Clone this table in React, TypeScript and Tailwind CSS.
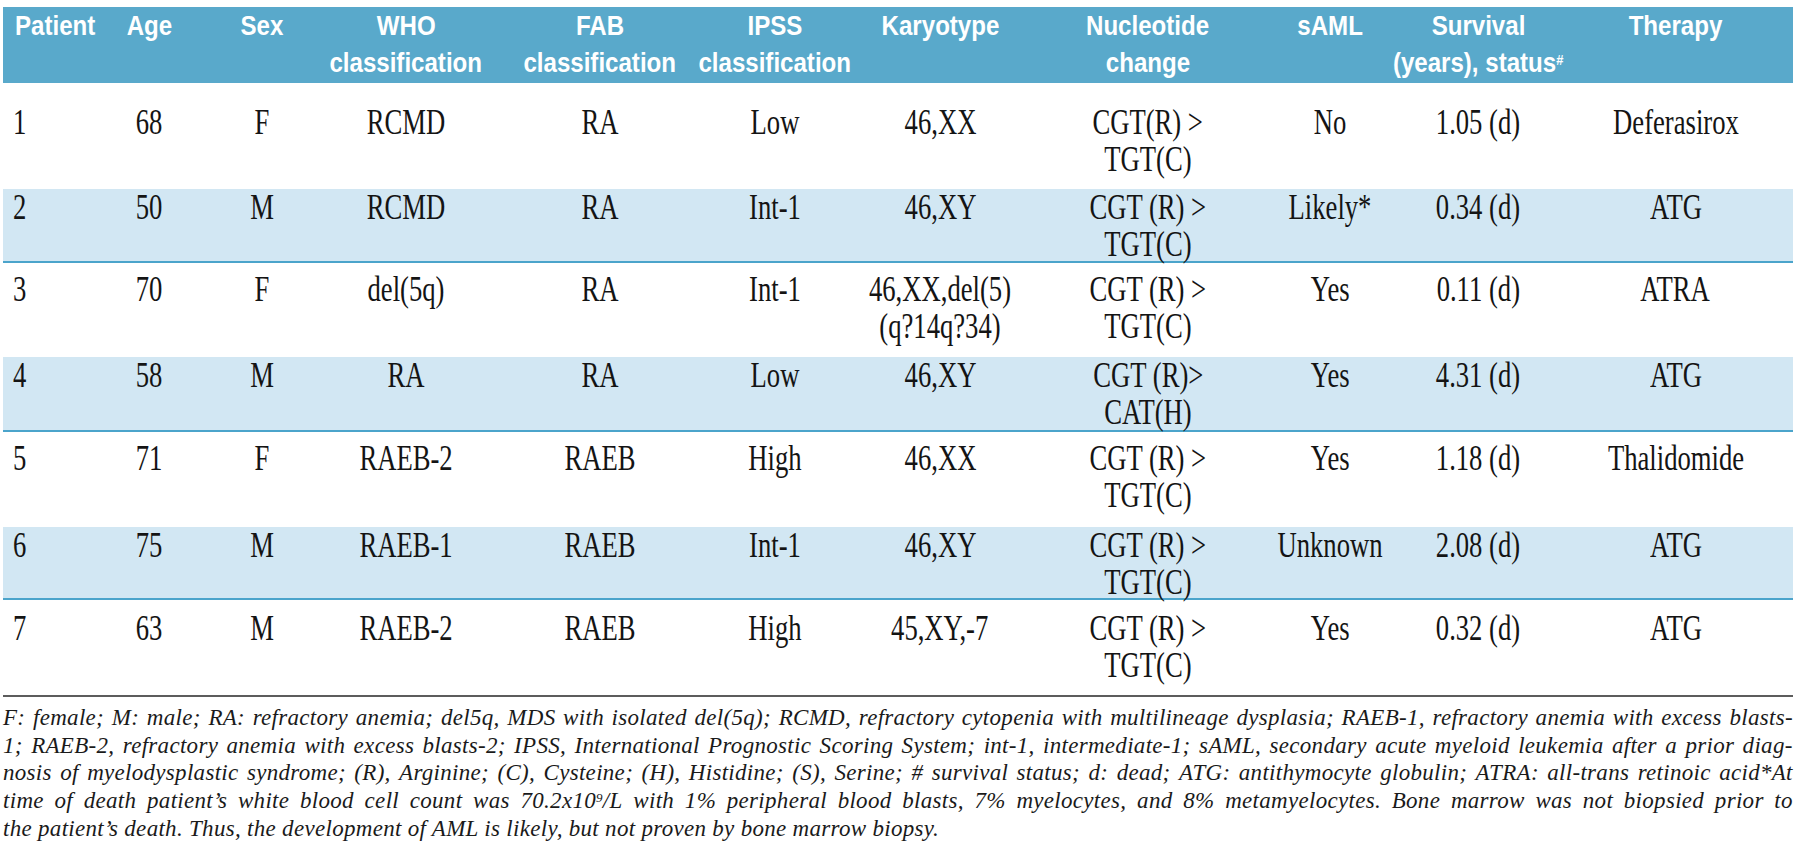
import React from "react";

type Cell = string | string[];

const header: (string | React.ReactNode)[][] = [
  ["Patient"],
  ["Age"],
  ["Sex"],
  ["WHO", "classification"],
  ["FAB", "classification"],
  ["IPSS", "classification"],
  ["Karyotype"],
  ["Nucleotide", "change"],
  ["sAML"],
  [
    "Survival",
    <>
      (years), status<sup className="text-[15px]">#</sup>
    </>,
  ],
  ["Therapy"],
];

const rows: Cell[][] = [
  ["1", "68", "F", "RCMD", "RA", "Low", "46,XX", ["CGT(R) >", "TGT(C)"], "No", "1.05 (d)", "Deferasirox"],
  ["2", "50", "M", "RCMD", "RA", "Int-1", "46,XY", ["CGT (R) >", "TGT(C)"], "Likely*", "0.34 (d)", "ATG"],
  ["3", "70", "F", "del(5q)", "RA", "Int-1", ["46,XX,del(5)", "(q?14q?34)"], ["CGT (R) >", "TGT(C)"], "Yes", "0.11 (d)", "ATRA"],
  ["4", "58", "M", "RA", "RA", "Low", "46,XY", ["CGT (R)>", "CAT(H)"], "Yes", "4.31 (d)", "ATG"],
  ["5", "71", "F", "RAEB-2", "RAEB", "High", "46,XX", ["CGT (R) >", "TGT(C)"], "Yes", "1.18 (d)", "Thalidomide"],
  ["6", "75", "M", "RAEB-1", "RAEB", "Int-1", "46,XY", ["CGT (R) >", "TGT(C)"], "Unknown", "2.08 (d)", "ATG"],
  ["7", "63", "M", "RAEB-2", "RAEB", "High", "45,XY,-7", ["CGT (R) >", "TGT(C)"], "Yes", "0.32 (d)", "ATG"],
];

const rowStyles = [
  "h-[106px] pt-[21px] bg-white",
  "h-[74px] pt-0 bg-[#d2e7f3] border-b-2 border-[#4ba4cb]",
  "h-[94px] pt-[8px] bg-white",
  "h-[75px] pt-0 bg-[#d2e7f3] border-b-2 border-[#4ba4cb]",
  "h-[95px] pt-[8px] bg-white",
  "h-[73px] pt-0 bg-[#d2e7f3] border-b-2 border-[#4ba4cb]",
  "h-[95px] pt-[10px] bg-white",
];

const gridCols =
  "grid grid-cols-[87px_118px_108px_180px_208px_142px_188px_228px_136px_160px_235px]";

const footLines: string[] = [
  "F: female; M: male; RA: refractory anemia; del5q, MDS with isolated del(5q); RCMD, refractory cytopenia with multilineage dysplasia; RAEB-1, refractory anemia with excess blasts-",
  "1; RAEB-2, refractory anemia with excess blasts-2; IPSS, International Prognostic Scoring System; int-1, intermediate-1; sAML, secondary acute myeloid leukemia after a prior diag-",
  "nosis of myelodysplastic syndrome; (R), Arginine; (C), Cysteine; (H), Histidine; (S), Serine; # survival status; d: dead; ATG: antithymocyte globulin; ATRA: all-trans retinoic acid*At",
  "time of death patient’s white blood cell count was 70.2x10^9/L with 1% peripheral blood blasts, 7% myelocytes, and 8% metamyelocytes. Bone marrow was not biopsied prior to",
];

function Word({ w }: { w: string }) {
  if (w === "70.2x10^9/L") {
    return (
      <span className="whitespace-nowrap">
        70.2x10<sup className="text-[13px]">9</sup>/L
      </span>
    );
  }
  return <span className="whitespace-nowrap">{w}</span>;
}

export default function App() {
  return (
    <div className="w-[1800px] h-[858px] overflow-hidden bg-white pt-[7px] pl-[3px]">
      <div className="w-[1790px]">
        {/* header */}
        <div className={`${gridCols} h-[76px] bg-[#59a9cb]`}>
          {header.map((lines, ci) => (
            <div
              key={ci}
              className={`flex flex-col ${ci === 0 ? "items-start pl-[12px]" : "items-center"}`}
            >
              {lines.map((l, li) => (
                <span
                  key={li}
                  className={`inline-block whitespace-nowrap font-['Liberation_Sans',Arial,sans-serif] font-bold text-[28px] leading-[37px] text-white scale-x-[0.86] ${ci === 0 ? "origin-left" : ""}`}
                >
                  {l}
                </span>
              ))}
            </div>
          ))}
        </div>

        {/* body rows */}
        {rows.map((row, ri) => (
          <div key={ri} className={`${gridCols} ${rowStyles[ri]}`}>
            {row.map((cell, ci) => {
              const lines = Array.isArray(cell) ? cell : [cell];
              return (
                <div
                  key={ci}
                  className={`flex flex-col ${ci === 0 ? "items-start pl-[10px]" : "items-center"}`}
                >
                  {lines.map((l, li) => (
                    <span
                      key={li}
                      className={`inline-block whitespace-nowrap font-['Liberation_Serif','Times_New_Roman',serif] text-[36px] leading-[37px] text-[#141414] scale-x-[0.74] ${ci === 0 ? "origin-left" : ""}`}
                    >
                      {l}
                    </span>
                  ))}
                </div>
              );
            })}
          </div>
        ))}

        {/* rule */}
        <div className="h-[2px] bg-[#5c5c5c]" />

        {/* footnote */}
        <div className="mt-[7px] font-['Liberation_Serif','Times_New_Roman',serif] italic text-[23px] tracking-[0.3px] leading-[27.7px] text-[#1a1a1a]">
          {footLines.map((l, i) => (
            <div key={i} className="flex justify-between">
              {l.split(" ").map((w, wi) => (
                <Word key={wi} w={w} />
              ))}
            </div>
          ))}
          <div className="whitespace-nowrap">
            the patient’s death. Thus, the development of AML is likely, but not proven by bone marrow biopsy.
          </div>
        </div>
      </div>
    </div>
  );
}
